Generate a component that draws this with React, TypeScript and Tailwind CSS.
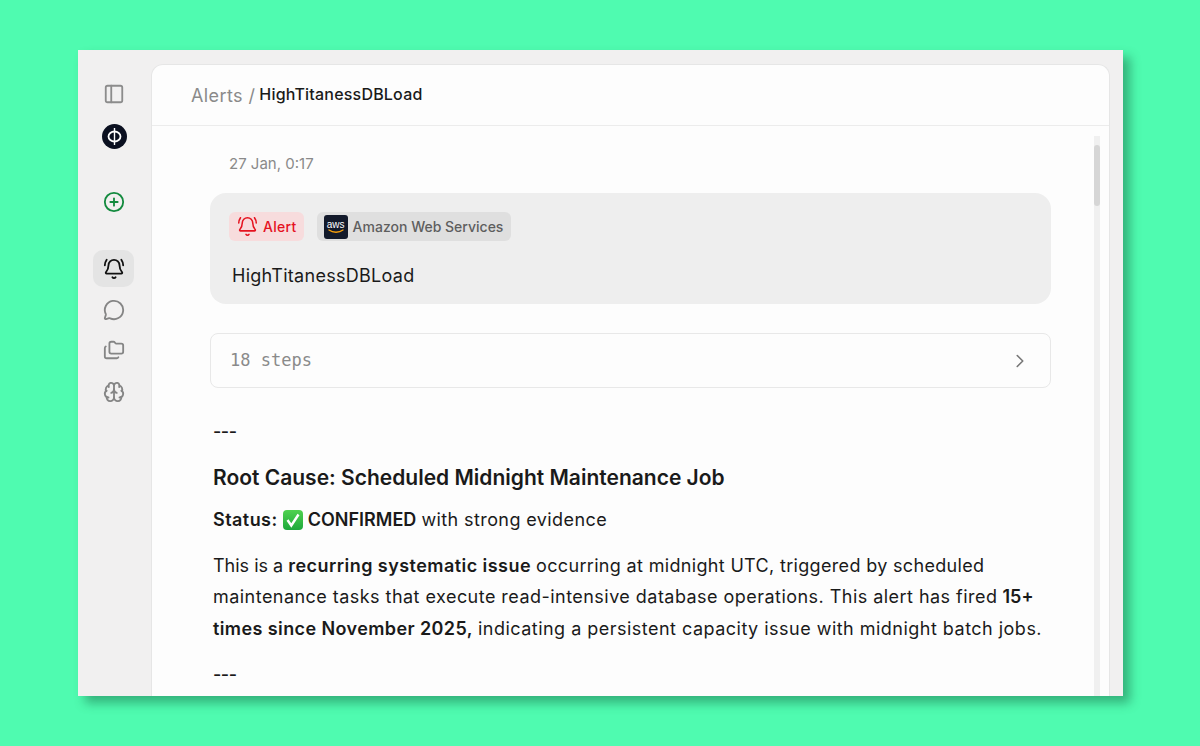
import { BellRing, Brain, ChevronRight, CirclePlus, Folders, MessageCircle, PanelLeft } from "lucide-react";

function PhiLogo() {
  return (
    <svg className="ml-[1px] mt-[19px]" width="25" height="25" viewBox="0 0 25 25">
      <circle cx="12.5" cy="12.5" r="12.5" fill="#0b1020" />
      <ellipse cx="12.5" cy="12.5" rx="6" ry="5" fill="none" stroke="#ffffff" strokeWidth="1.8" />
      <path d="M12.5 4v17" stroke="#ffffff" strokeWidth="1.4" />
    </svg>
  );
}

function Sidebar() {
  return (
    <div className="flex w-[73px] shrink-0 flex-col items-center pr-[2px] pt-[33px]">
      <PanelLeft className="ml-[1px] h-[22px] w-[22px] text-[#8c8c8c]" strokeWidth={2} />
      <PhiLogo />
      <CirclePlus className="mt-[42px] h-[22px] w-[22px] text-[#138a3e]" strokeWidth={2} />
      <div className="mt-[37px] flex h-[37px] w-[41px] items-center justify-center rounded-[10px] bg-[#e4e4e4]">
        <BellRing className="h-[22px] w-[22px] text-[#111111]" strokeWidth={2} />
      </div>
      <MessageCircle className="mt-[12px] h-[22px] w-[22px] text-[#858585]" strokeWidth={2} />
      <Folders className="mt-[18px] h-[22px] w-[22px] text-[#858585]" strokeWidth={2} />
      <Brain className="mt-[20px] h-[22px] w-[22px] text-[#858585]" strokeWidth={2} />
    </div>
  );
}

function AwsLogo() {
  return (
    <div className="flex h-[24px] w-[24px] flex-col items-center justify-center rounded-[3px] bg-[#131a2b]">
      <span className="font-['Liberation_Sans',sans-serif] text-[10px] leading-[9px] text-white">aws</span>
      <svg width="16" height="5" viewBox="0 0 16 5" fill="none">
        <path d="M1 1c4 3 10 3 14 0" stroke="#f59e0b" strokeWidth="1.4" strokeLinecap="round" />
      </svg>
    </div>
  );
}

function CheckEmoji() {
  return (
    <svg className="inline-block align-[-4px]" width="20" height="20" viewBox="0 0 20 20">
      <defs>
        <linearGradient id="check-bg" x1="0" y1="0" x2="0" y2="1">
          <stop offset="0" stopColor="#4fd24f" />
          <stop offset="1" stopColor="#1ea83c" />
        </linearGradient>
      </defs>
      <rect x="0" y="0" width="20" height="20" rx="4" fill="url(#check-bg)" />
      <path d="M4.5 10l3.8 5.5 7.2-11" fill="none" stroke="#ffffff" strokeWidth="2.4" />
    </svg>
  );
}

function AlertCard() {
  return (
    <div className="mt-[19px] h-[111px] rounded-[16px] bg-[#eeeeee] pl-[19px] pt-[19px]">
      <div className="flex items-center gap-[13px]">
        <div className="flex h-[29px] items-center gap-[5px] rounded-[6px] bg-[#f7dcdd] pl-[8px] pr-[7px] text-[14px] font-medium tracking-[0.3px] text-[#e5121f]">
          <BellRing className="h-[21px] w-[21px]" strokeWidth={1.75} />
          Alert
        </div>
        <div className="flex h-[29px] items-center gap-[5px] rounded-[6px] bg-[#dfdfdf] pl-[7px] pr-[8px] text-[14px] font-medium text-[#5e5e5e]">
          <AwsLogo />
          Amazon Web Services
        </div>
      </div>
      <div className="mt-[21px] pl-[3px] text-[18px] leading-[28px] tracking-[0.28px] text-[#1a1a1a]">HighTitanessDBLoad</div>
    </div>
  );
}

function Report() {
  return (
    <div className="mt-[30px] pl-[3px] text-[#1a1a1a]">
      <div className="text-[18px] font-medium leading-[28px] tracking-[-0.5px]">---</div>
      <h2 className="mt-[18px] text-[21px] font-semibold leading-[28px]">Root Cause: Scheduled Midnight Maintenance Job</h2>
      <p className="mt-[14px] text-[18px] leading-[28px]">
        <b className="font-semibold tracking-[0.45px]">Status:</b> <CheckEmoji /> <b className="font-semibold">CONFIRMED</b> <span className="tracking-[0.4px]">with strong evidence</span>
      </p>
      <p className="mt-[15.7px] w-[840px] text-[18px] leading-[31.5px]">
        This is a <b className="font-semibold tracking-[0.45px]">recurring systematic issue</b>{" "}
        <span className="tracking-[0.33px]">occurring at midnight UTC, triggered by scheduled</span>{" "}
        <span className="tracking-[0.46px]">maintenance tasks that execute read-intensive database operations. This alert has fired</span>{" "}
        <b className="font-semibold">15+ <span className="tracking-[0.4px]">times since November 2025,</span></b>{" "}
        <span className="tracking-[0.48px]">indicating a persistent capacity issue with midnight batch jobs.</span>
      </p>
      <div className="mt-[17px] text-[18px] font-medium leading-[28px] tracking-[-0.5px]">---</div>
    </div>
  );
}

export default function App() {
  return (
    <div className="h-[746px] w-[1200px] overflow-hidden bg-[#4ffbb0] pl-[78px] pt-[50px] font-['Inter',sans-serif]">
      <div className="flex h-[646px] w-[1045px] bg-[#f1f0f0] shadow-[7px_7px_10px_rgba(20,90,60,0.45)]">
        <Sidebar />
        <div className="mt-[14px] flex h-[632px] w-[959px] flex-col overflow-hidden rounded-t-[12px] border-x border-t border-[#e6e6e6] bg-[#fdfdfd]">
          <div className="flex h-[61px] shrink-0 items-center border-b border-[#ececec] pl-[39px]">
            <span className="text-[18px] tracking-[0.4px] text-[#8a8a8a]">Alerts /</span>
            <span className="ml-[4px] pb-[2px] text-[16px] font-medium tracking-[0.2px] text-[#1a1a1a]">HighTitanessDBLoad</span>
          </div>
          <div className="flex min-h-0 flex-1">
            <div className="w-[942px] shrink-0 pl-[58px] pr-[43px] pt-[28px]">
              <div className="pl-[19px] text-[15px] leading-[20px] text-[#8a8a8a]">27 Jan, 0:17</div>
              <AlertCard />
              <div className="mt-[29px] flex h-[55px] items-center justify-between rounded-[8px] border border-[#e8e8e8] pl-[19px] pr-[19px]">
                <span className="font-['DejaVu_Sans_Mono',monospace] text-[17px] text-[#8a8a8a]">18 steps</span>
                <ChevronRight className="h-[22px] w-[22px] text-[#777777]" strokeWidth={1.75} />
              </div>
              <Report />
            </div>
            <div className="mt-[10px] h-full w-[6px] shrink-0 bg-[#f0f0f0]">
              <div className="mt-[9px] h-[61px] w-[6px] rounded-[3px] bg-[#d6d6d6]" />
            </div>
          </div>
        </div>
      </div>
    </div>
  );
}
